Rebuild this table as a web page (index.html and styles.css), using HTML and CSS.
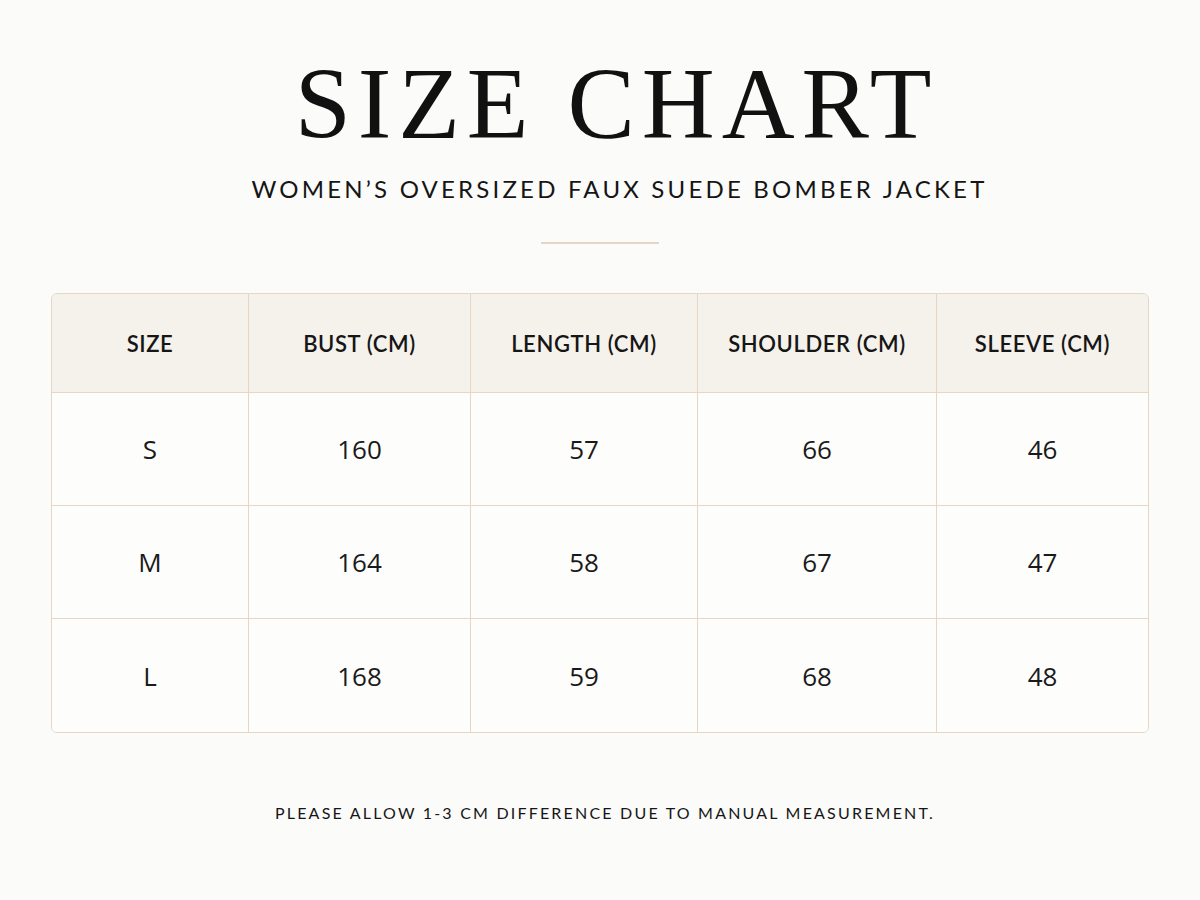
FILE: index.html
```html
<!DOCTYPE html>
<html lang="en">
<head>
<meta charset="utf-8">
<title>Size Chart</title>
<link rel="stylesheet" href="styles.css">
</head>
<body>
<main class="page">
  <header class="head">
    <h1 class="title">SIZE CHART</h1>
    <p class="subtitle">WOMEN’S OVERSIZED FAUX SUEDE BOMBER JACKET</p>
    <div class="rule"></div>
  </header>
  <table class="chart">
    <colgroup>
      <col class="c1"><col class="c2"><col class="c3"><col class="c4"><col class="c5">
    </colgroup>
    <thead>
      <tr><th>SIZE</th><th>BUST (CM)</th><th>LENGTH (CM)</th><th>SHOULDER (CM)</th><th>SLEEVE (CM)</th></tr>
    </thead>
    <tbody>
      <tr><td>S</td><td>160</td><td>57</td><td>66</td><td>46</td></tr>
      <tr><td>M</td><td>164</td><td>58</td><td>67</td><td>47</td></tr>
      <tr><td>L</td><td>168</td><td>59</td><td>68</td><td>48</td></tr>
    </tbody>
  </table>
  <p class="note">PLEASE ALLOW 1-3 CM DIFFERENCE DUE TO MANUAL MEASUREMENT.</p>
</main>
</body>
</html>
```
FILE: styles.css
```css
html, body {
  margin: 0;
  padding: 0;
  background: #fbfbfa;
}
body {
  font-family: "Lato", "Noto Sans", sans-serif;
  color: #141414;
}
.page {
  width: 1200px;
  height: 900px;
  box-sizing: border-box;
  padding: 49px 51px 0 51px;
  display: flex;
  flex-direction: column;
  align-items: center;
}
.head {
  display: flex;
  flex-direction: column;
  align-items: center;
}
.title {
  margin: 0;
  padding-left: 33px;
  font-family: "Liberation Serif", serif;
  font-weight: 400;
  font-size: 101px;
  line-height: 110px;
  letter-spacing: 6.9px;
  color: #111;
}
.subtitle {
  margin: 15px 0 0 0;
  padding-left: 39px;
  font-family: "Lato", sans-serif;
  font-size: 24px;
  line-height: 30px;
  letter-spacing: 3.2px;
  font-weight: 400;
  color: #151515;
}
.rule {
  width: 118px;
  height: 2px;
  background: #e6d5c2;
  margin-top: 38px;
}
.chart {
  margin-top: 49px;
  width: 1098px;
  border-collapse: separate;
  border-spacing: 0;
  border: 1px solid #e7d6c3;
  border-radius: 6px;
  overflow: hidden;
  table-layout: fixed;
}
.c1 { width: 197px; }
.c2 { width: 222px; }
.c3 { width: 227px; }
.c4 { width: 239px; }
.c5 { width: auto; }
.chart th, .chart td {
  text-align: center;
  border-right: 1px solid #e7d6c3;
  border-bottom: 1px solid #e7d6c3;
  padding: 0;
}
.chart th:last-child, .chart td:last-child { border-right: none; }
.chart tbody tr:last-child td { border-bottom: none; }
.chart th {
  background: #f5f1eb;
  height: 98px;
  font-weight: 600;
  font-size: 22px;
  letter-spacing: 0.6px;
  color: #161616;
}
.chart td {
  background: #fdfdfc;
  height: 112px;
  font-family: "Open Sans", "Lato", sans-serif;
  font-weight: 400;
  font-size: 26px;
  color: #1a1a1a;
}
.chart tbody tr:last-child td { height: 113px; }
.note {
  margin: 70px 0 0 0;
  padding-left: 10px;
  font-family: "Lato", sans-serif;
  font-size: 16px;
  letter-spacing: 2.2px;
  font-weight: 400;
  color: #161616;
}
```
